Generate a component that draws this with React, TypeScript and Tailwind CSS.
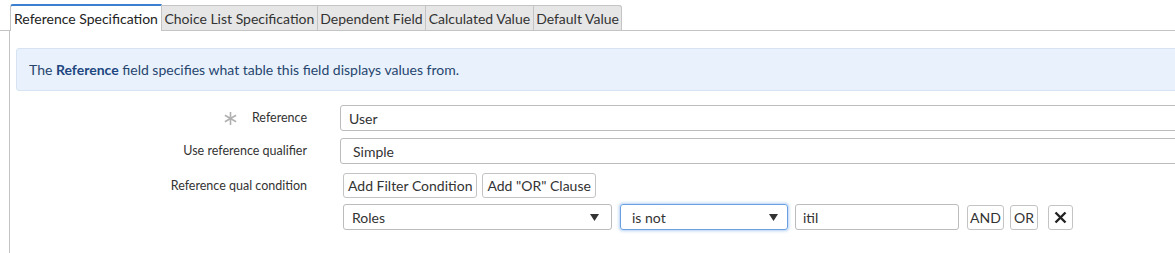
const tabs = ['Reference Specification', 'Choice List Specification', 'Dependent Field', 'Calculated Value', 'Default Value'];

function Arrow() {
  return (
    <svg width="9" height="7" viewBox="0 0 9 7" className="shrink-0">
      <path d="M0 0 H9 L4.5 7 Z" fill="#333" />
    </svg>
  );
}

function Star() {
  return (
    <svg width="15" height="15" viewBox="0 0 15 15" className="shrink-0">
      <path d="M7.5 1 V14 M1.9 4.25 L13.1 10.75 M13.1 4.25 L1.9 10.75" stroke="#b0b0b0" strokeWidth="1.6" />
    </svg>
  );
}

function Label({ children, star }: { children: React.ReactNode; star?: boolean }) {
  return (
    <div className="w-[291px] shrink-0 flex items-center justify-end gap-[14px] text-[12.5px] text-[#333]">
      {star && <Star />}
      {children}
    </div>
  );
}

export default function App() {
  return (
    <div className="w-[1175px] h-[253px] bg-white overflow-hidden text-[#333]" style={{ fontFamily: 'Lato, "Open Sans", sans-serif' }}>
      <div className="flex items-end pl-[10px] pt-[4px] h-[31px] border-b border-[#c4c4c4]">
        {tabs.map((t, i) =>
          i === 0 ? (
            <div key={t} className="h-[27px] -mb-px bg-white border-t-2 border-t-[#3d7fcf] border-x border-x-[#c4c4c4] px-[3px] flex items-center text-[14px] text-[#222] rounded-tl-[3px]">
              {t}
            </div>
          ) : (
            <div key={t} className={`h-[25px] bg-[#e6e6e6] border-t border-r border-[#c4c4c4] px-[2.5px] flex items-center text-[14px] text-[#333] ${i === tabs.length - 1 ? 'rounded-tr-[3px]' : ''}`}>
              {t}
            </div>
          )
        )}
      </div>
      <div className="ml-[9px] h-[222px] border-l border-[#c4c4c4] pl-[6px] pt-[17px]">
        <div className="h-[43px] bg-[#e9f2fc] border border-[#d5e3f3] rounded-[3px] pl-[12px] flex items-center text-[14px] text-[#26456e] w-[1200px]">
          <span>
            The <b className="font-bold text-[#1d4680]">Reference</b> field specifies what table this field displays values from.
          </span>
        </div>
        <div className="mt-[14px] flex items-center gap-[33px]">
          <Label star>Reference</Label>
          <div className="shrink-0 h-[26px] w-[870px] border border-[#bcbcbc] rounded-[3px] pl-[8px] flex items-center text-[14px]">User</div>
        </div>
        <div className="mt-[7px] flex items-center gap-[33px]">
          <Label>Use reference qualifier</Label>
          <div className="shrink-0 h-[26px] w-[870px] border border-[#bcbcbc] rounded-[3px] pl-[12px] flex items-center text-[14px]">Simple</div>
        </div>
        <div className="mt-[9px] flex items-start gap-[36px]">
          <div className="w-[291px] shrink-0 text-right text-[12.5px] pt-[4px]">Reference qual condition</div>
          <div className="flex flex-col gap-[6px]">
            <div className="flex gap-[5px]">
              <button className="h-[25px] px-[4px] border border-[#c4c4c4] rounded-[3px] bg-white text-[14px] text-[#333]">Add Filter Condition</button>
              <button className="h-[25px] px-[4px] border border-[#c4c4c4] rounded-[3px] bg-white text-[14px] text-[#333]">Add "OR" Clause</button>
            </div>
            <div className="flex items-center">
              <div className="h-[26px] w-[269px] border border-[#bcbcbc] rounded-[3px] pl-[8px] pr-[12px] flex items-center justify-between text-[14px]">
                Roles
                <Arrow />
              </div>
              <div className="ml-[8px] h-[26px] w-[168px] border border-[#6aa0e0] rounded-[3px] pl-[11px] pr-[9px] flex items-center justify-between text-[14px] shadow-[0_0_3px_1px_rgba(90,150,230,0.45)]">
                is not
                <Arrow />
              </div>
              <div className="ml-[7px] h-[26px] w-[164px] border border-[#bcbcbc] rounded-[3px] pl-[7px] flex items-center text-[14px]">itil</div>
              <button className="ml-[8px] h-[25px] w-[37px] border border-[#c4c4c4] rounded-[3px] bg-white text-[14px] text-[#333]">AND</button>
              <button className="ml-[6px] h-[25px] w-[28px] border border-[#c4c4c4] rounded-[3px] bg-white text-[14px] text-[#333]">OR</button>
              <button className="ml-[10px] h-[25px] w-[25px] border border-[#c4c4c4] rounded-[3px] bg-white flex items-center justify-center">
                <svg width="13" height="13" viewBox="0 0 13 13">
                  <path d="M1.5 1.5 L11.5 11.5 M11.5 1.5 L1.5 11.5" stroke="#222" strokeWidth="2.4" />
                </svg>
              </button>
            </div>
          </div>
        </div>
      </div>
    </div>
  );
}
